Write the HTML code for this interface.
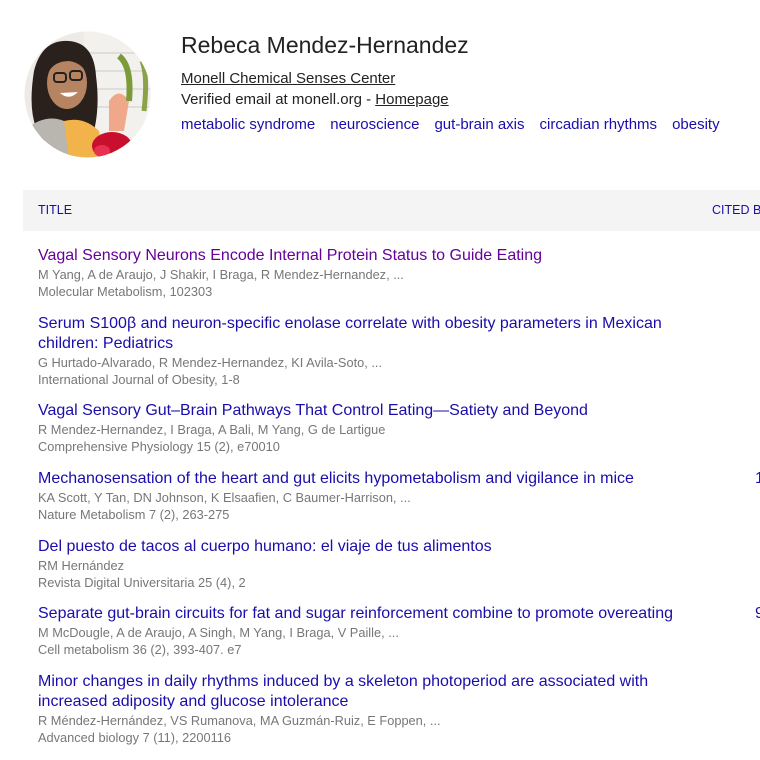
<!DOCTYPE html>
<html><head><meta charset="utf-8"><style>
*{margin:0;padding:0;box-sizing:border-box}
body{width:760px;height:760px;overflow:hidden;background:#fff;font-family:"Liberation Sans",Arial,sans-serif;position:relative}
.a{position:absolute;white-space:nowrap}
.name{left:181px;top:32px;font-size:23px;color:#222}
.aff{left:181px;top:70px;font-size:15px;color:#222;text-decoration:underline}
.ver{left:181px;top:91px;font-size:15px;color:#222}
.ver u{text-decoration:underline}
.int{left:181px;top:116px;font-size:15px;color:#1a0dab}
.int span{margin-right:15px}
.hdr{left:23px;top:190px;width:737px;height:41px;background:#f4f4f4}
.th{font-size:12.5px;color:#1a0dab;top:203px}
.row{position:absolute;left:38px}
.t{font-size:16px;line-height:20px;color:#1a0dab}
.g{font-size:12.8px;line-height:17px;color:#777;white-space:nowrap}
</style></head><body>
<svg class="a" style="left:24px;top:31px" width="127" height="127" viewBox="0 0 127 127">
<defs><clipPath id="c"><circle cx="63.5" cy="63.5" r="63"/></clipPath></defs>
<g clip-path="url(#c)">
<rect width="127" height="127" fill="#eeeae6"/>
<rect x="60" y="0" width="67" height="127" fill="#f3f1ee"/>
<g stroke="#d9d7d3" stroke-width="1.5"><line x1="60" y1="22" x2="127" y2="22"/><line x1="60" y1="40" x2="127" y2="40"/><line x1="60" y1="58" x2="127" y2="58"/><line x1="60" y1="76" x2="127" y2="76"/></g>
<path d="M10 40 Q18 8 45 10 Q70 12 72 45 Q76 75 70 100 L20 110 Q2 90 10 40Z" fill="#2a211d"/>
<ellipse cx="43" cy="52" rx="20" ry="26" fill="#b78462"/>
<path d="M24 42 Q30 30 45 30 Q58 32 62 42 L62 38 Q55 20 42 20 Q28 22 24 42Z" fill="#2a211d"/>
<rect x="30" y="42" width="12" height="9" rx="3" fill="none" stroke="#222" stroke-width="2"/>
<rect x="46" y="40" width="12" height="9" rx="3" fill="none" stroke="#222" stroke-width="2"/>
<path d="M36 62 Q45 70 54 61" fill="#fff"/>
<path d="M0 100 Q20 82 40 90 L55 127 L0 127Z" fill="#b9b6b0"/>
<path d="M40 90 Q60 85 75 100 L80 127 L45 127Z" fill="#f2b34a"/>
<path d="M85 70 Q95 55 105 70 L100 100 L85 100Z" fill="#efa88a"/>
<path d="M95 25 Q108 35 105 70" stroke="#7b9a3a" stroke-width="6" fill="none"/>
<path d="M118 30 Q124 45 120 80" stroke="#8aa34a" stroke-width="5" fill="none"/>
<ellipse cx="88" cy="115" rx="20" ry="14" fill="#c8102e"/>
<ellipse cx="78" cy="120" rx="8" ry="6" fill="#e83050"/>
</g></svg>
<div class="a name">Rebeca Mendez-Hernandez</div>
<div class="a aff">Monell Chemical Senses Center</div>
<div class="a ver">Verified email at monell.org - <u>Homepage</u></div>
<div class="a int"><span>metabolic syndrome</span><span>neuroscience</span><span>gut-brain axis</span><span>circadian rhythms</span><span style="margin:0">obesity</span></div>
<div class="a hdr"></div>
<div class="a th" style="left:38px">TITLE</div>
<div class="a th" style="left:712px">CITED BY</div>

<div class="row" style="top:246px"><div class="t" style="color:#660099">Vagal Sensory Neurons Encode Internal Protein Status to Guide Eating</div><div class="g">M Yang, A de Araujo, J Shakir, I Braga, R Mendez-Hernandez, ...</div><div class="g">Molecular Metabolism, 102303</div></div>
<div class="row" style="top:314px"><div class="t">Serum S100β and neuron-specific enolase correlate with obesity parameters in Mexican<br>children: Pediatrics</div><div class="g">G Hurtado-Alvarado, R Mendez-Hernandez, KI Avila-Soto, ...</div><div class="g">International Journal of Obesity, 1-8</div></div>
<div class="row" style="top:401px"><div class="t">Vagal Sensory Gut–Brain Pathways That Control Eating—Satiety and Beyond</div><div class="g">R Mendez-Hernandez, I Braga, A Bali, M Yang, G de Lartigue</div><div class="g">Comprehensive Physiology 15 (2), e70010</div></div>
<div class="row" style="top:469px"><div class="t">Mechanosensation of the heart and gut elicits hypometabolism and vigilance in mice</div><div class="g">KA Scott, Y Tan, DN Johnson, K Elsaafien, C Baumer-Harrison, ...</div><div class="g">Nature Metabolism 7 (2), 263-275</div></div>
<div class="row" style="top:537px"><div class="t">Del puesto de tacos al cuerpo humano: el viaje de tus alimentos</div><div class="g">RM Hernández</div><div class="g">Revista Digital Universitaria 25 (4), 2</div></div>
<div class="row" style="top:604px"><div class="t">Separate gut-brain circuits for fat and sugar reinforcement combine to promote overeating</div><div class="g">M McDougle, A de Araujo, A Singh, M Yang, I Braga, V Paille, ...</div><div class="g">Cell metabolism 36 (2), 393-407. e7</div></div>
<div class="row" style="top:672px"><div class="t">Minor changes in daily rhythms induced by a skeleton photoperiod are associated with<br>increased adiposity and glucose intolerance</div><div class="g">R Méndez-Hernández, VS Rumanova, MA Guzmán-Ruiz, E Foppen, ...</div><div class="g">Advanced biology 7 (11), 2200116</div></div>

<div class="a t" style="left:755px;top:469px">1</div>
<div class="a t" style="left:755px;top:604px">9</div>
</body></html>
